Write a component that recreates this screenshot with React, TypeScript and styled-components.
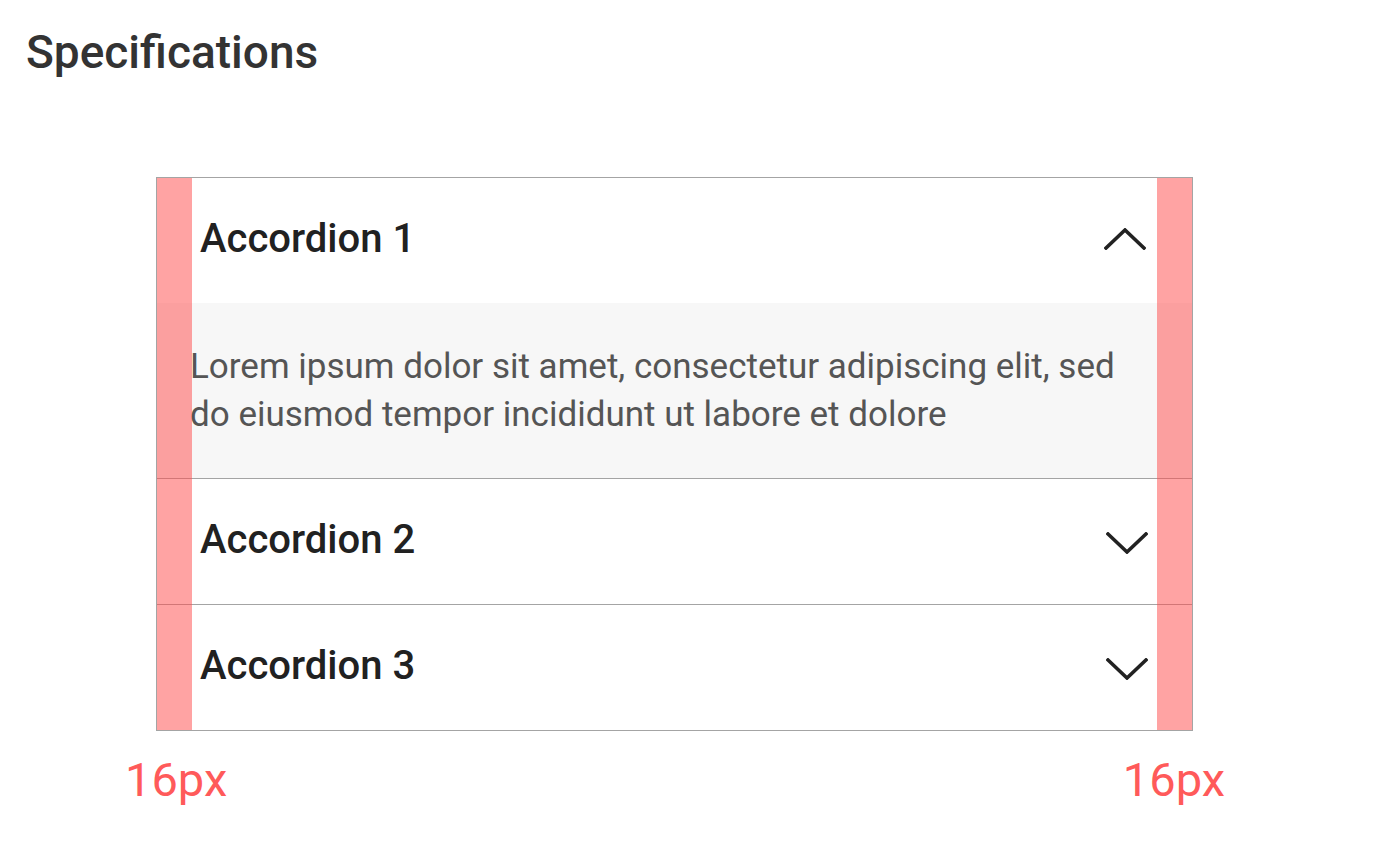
import React from 'react';
import styled, { createGlobalStyle } from 'styled-components';

const GlobalStyle = createGlobalStyle`
    body {
        margin: 0;
        background: #ffffff;
        font-family: Roboto, "Liberation Sans", sans-serif;
    }
`;

const Page = styled.div`
    padding: 21px 0 0 26px;
`;

const Heading = styled.h1`
    margin: 0;
    font-size: 46px;
    font-weight: 500;
    line-height: 62px;
    color: #333333;
`;

const Frame = styled.div`
    margin: 94px 0 0 130px;
    width: 1037px;
`;

const Accordion = styled.div`
    position: relative;
    border: 1px solid #a4a4a4;
`;

const Item = styled.div`
    & + & {
        border-top: 1px solid #a4a4a4;
    }
`;

const Header = styled.div`
    display: flex;
    align-items: center;
    justify-content: space-between;
    height: 125px;
    padding: 0 0 0 43px;
    box-sizing: border-box;
`;

const Title = styled.span`
    font-size: 40px;
    font-weight: 500;
    color: #212121;
    margin-top: -4px;
`;

const Icon = styled.span<{ $open: boolean }>`
    display: flex;
    margin-right: ${p => (p.$open ? 46 : 44)}px;
    margin-top: ${p => (p.$open ? -4 : 2)}px;
`;

const Body = styled.div`
    background: #f7f7f7;
    padding: 40px 35px 39px 33px;
    font-size: 35px;
    line-height: 48px;
    color: #555555;
`;

const Guide = styled.div<{ $side: 'left' | 'right' }>`
    position: absolute;
    top: 0;
    bottom: 0;
    ${p => p.$side}: 0;
    width: 35px;
    background: rgba(255, 72, 72, 0.5);
    pointer-events: none;
`;

const Labels = styled.div`
    display: flex;
    justify-content: space-between;
    margin: 18px -32px 0 -31px;
`;

const Label = styled.span`
    font-size: 47px;
    line-height: 62px;
    color: #ff5a5a;
`;

const Chevron = ({ up }: { up: boolean }) => (
    <svg width="42" height="22" viewBox="0 0 42 22" fill="none">
        <path
            d={up ? 'M2 20 L21 2 L40 20' : 'M2 2 L21 20 L40 2'}
            stroke="#222222"
            strokeWidth="3.6"
            strokeLinecap="square"
        />
    </svg>
);

const items = [
    { title: 'Accordion 1', open: true },
    { title: 'Accordion 2', open: false },
    { title: 'Accordion 3', open: false },
];

const App = () => (
    <>
        <GlobalStyle />
        <Page>
            <Heading>Specifications</Heading>
            <Frame>
                <Accordion>
                    {items.map(item => (
                        <Item key={item.title}>
                            <Header>
                                <Title>{item.title}</Title>
                                <Icon $open={item.open}>
                                    <Chevron up={item.open} />
                                </Icon>
                            </Header>
                            {item.open && (
                                <Body>
                                    Lorem ipsum dolor sit amet, consectetur adipiscing elit, sed do eiusmod tempor incididunt ut labore et dolore
                                </Body>
                            )}
                        </Item>
                    ))}
                    <Guide $side="left" />
                    <Guide $side="right" />
                </Accordion>
                <Labels>
                    <Label>16px</Label>
                    <Label>16px</Label>
                </Labels>
            </Frame>
        </Page>
    </>
);

export default App;
